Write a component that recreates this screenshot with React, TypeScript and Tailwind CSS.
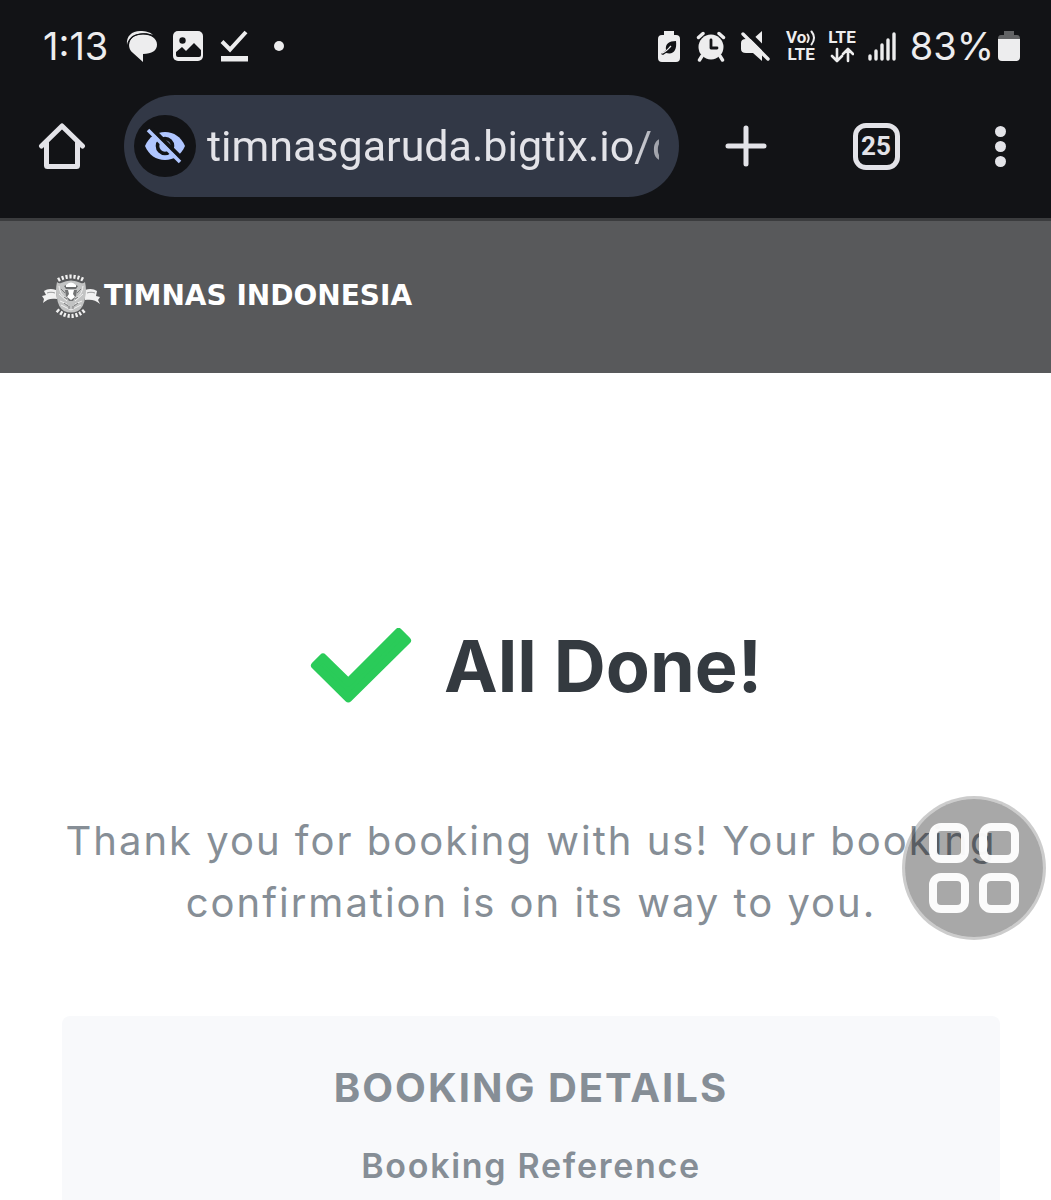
import { useState } from "react";

function StatusBar() {
  return (
    <div className="flex h-[92px] items-center justify-between pl-[43px] pr-[31px] text-[38px] text-[#ededee]">
      <div className="flex items-center">
        <span className="leading-none">1:13</span>
        {/* messages */}
        <svg className="ml-[18px] h-8 w-8" viewBox="0 0 32 32" fill="currentColor">
          <path d="M1 15C0 6 6 1 14 1c6 0 10 1 13 4C22 3 17 3 12 4 6 5 2 9 1 15Z" />
          <path d="M17 4.500c8 0 14 4 14 10s-5 9.500-14 9.500v8L7 23c-3-2-4-5-4-8.500C3 8.500 9 4.500 17 4.500Z" />
          <path
            d="M2.500 15C3 8.500 8 4 17 3.800c4 0 7 .7 10 2.200"
            fill="none"
            stroke="#121316"
            strokeWidth="1"
          />
        </svg>
        {/* gallery */}
        <svg className="ml-[14px] h-8 w-8" viewBox="0 0 32 32">
          <rect x="1" y="1" width="30" height="30" rx="5" fill="currentColor" />
          <circle cx="10.500" cy="10.500" r="3.200" fill="#121316" />
          <path
            d="M4 25v-3l6-5 4 4 8-8 7 7v5q0 2-2 2H6q-2 0-2-2Z"
            fill="#121316"
          />
        </svg>
        {/* task done */}
        <svg className="ml-4 h-8 w-[30px]" viewBox="0 0 30 32">
          <path
            d="M2 11.500l8 8L26 2"
            fill="none"
            stroke="currentColor"
            strokeWidth="4"
          />
          <path d="M1 26h27v5.500H1z" fill="currentColor" />
        </svg>
        <span className="ml-6 h-[10px] w-[10px] rounded-full bg-[#ededee]"></span>
      </div>

      <div className="flex items-center">
        {/* power saving */}
        <svg className="h-8 w-6" viewBox="0 0 24 32" fill="currentColor">
          <path d="M7 1h10v4h2q4 0 4 4v19q0 4-4 4H5q-4 0-4-4V9q0-4 4-4h2z" />
          <path
            d="M19 11c1 9-2 14-10 12l-3 2-2-1 5-4c-1-6 3-9 10-9Z"
            fill="#121316"
          />
          <path
            d="M5 23c4-1 6-4 9-7"
            fill="none"
            stroke="currentColor"
            strokeWidth="1.300"
          />
        </svg>
        {/* alarm */}
        <svg
          className="ml-[15px] h-8 w-[30px]"
          viewBox="0 0 30 32"
          stroke="currentColor"
          strokeLinecap="round"
          strokeLinejoin="round"
        >
          <path
            d="M2.500 7.500l4.500-4M27.500 7.500l-4.500-4M6 26l-2.500 4M24 26l2.500 4"
            fill="none"
            strokeWidth="3.400"
          />
          <circle cx="15" cy="17" r="12.500" fill="currentColor" stroke="none" />
          <path
            d="M15 10v8h6"
            fill="none"
            stroke="#121316"
            strokeWidth="2.800"
          />
        </svg>
        {/* muted */}
        <svg className="ml-[14px] h-8 w-[30px]" viewBox="0 0 30 32">
          <path
            d="M13 9l9-8v30l-9-8H6q-5 0-5-4v-6q0-4 5-4z"
            fill="currentColor"
          />
          <path d="M5 0l27 27" stroke="#121316" strokeWidth="5" />
          <path
            d="M3 4l25 25"
            stroke="currentColor"
            strokeWidth="3.400"
            strokeLinecap="round"
          />
        </svg>
        <span className="ml-4 flex flex-col items-center font-[Roboto] text-[17px] font-bold leading-[17px]">
          <span className="flex items-center">
            Vo
            <svg
              className="h-[17px] w-[10px]"
              viewBox="0 0 10 17"
              fill="none"
              stroke="currentColor"
              strokeWidth="2"
              strokeLinecap="round"
            >
              <path d="M1.500 5.500q2.500 3.500 0 7.500M5.500 2.500q5 6 0 13" />
            </svg>
          </span>
          <span>LTE</span>
        </span>
        <span className="ml-3 flex flex-col items-center font-[Roboto] text-[17px] font-bold leading-[17px]">
          <span>LTE</span>
          <svg
            className="h-[17px] w-6"
            viewBox="0 0 24 17"
            fill="none"
            stroke="currentColor"
            strokeWidth="2.600"
            strokeLinecap="round"
            strokeLinejoin="round"
          >
            <path d="M7 3v11M2 10l5 5 5-5M18 15V3M13 8l5-5 5 5" />
          </svg>
        </span>
        <svg
          className="ml-3 h-8 w-7"
          viewBox="0 0 28 32"
          fill="none"
          stroke="currentColor"
          strokeWidth="3.400"
          strokeLinecap="round"
        >
          <path d="M2 26v3M8 21v8M14 15v14M20 10v19M26 4v25" />
        </svg>
        <span className="ml-[14px] leading-none">83%</span>
        <svg className="ml-1 h-8 w-[22px]" viewBox="0 0 22 32">
          <path d="M6 1h10v4h3q3 0 3 4H0q0-4 3-4h3z" fill="#626365" />
          <path d="M0 9h22v18q0 4-4 4H4q-4 0-4-4z" fill="currentColor" />
        </svg>
      </div>
    </div>
  );
}

function BrowserBar() {
  const [url, setUrl] = useState("timnasgaruda.bigtix.io/c");

  return (
    <div className="flex items-center pb-[21px] pt-[3px] text-[#e3e3e8]">
      <button className="flex w-[124px] justify-center" aria-label="Home">
        <svg
          className="h-12 w-12"
          viewBox="0 0 48 48"
          fill="none"
          stroke="currentColor"
          strokeWidth="5"
          strokeLinecap="round"
          strokeLinejoin="round"
        >
          <path d="M3.500 24L24 4l20.500 20" />
          <path d="M8.500 21v22.500q0 1 1 1h29q1 0 1-1V21" />
        </svg>
      </button>
      <div className="flex h-[102px] min-w-0 flex-1 items-center rounded-full bg-[#323846] pl-[10px] pr-5">
        <button
          className="flex h-[62px] w-[62px] shrink-0 items-center justify-center rounded-full bg-[#121316] text-[#b0c6ff]"
          aria-label="Tracking protection"
        >
          <svg className="h-10 w-10" viewBox="0 0 40 40">
            <path
              d="M0 20C4 11 11 6 20 6s16 5 20 14c-4 9-11 14-20 14S4 29 0 20Z"
              fill="currentColor"
            />
            <circle
              cx="20"
              cy="20"
              r="7.500"
              fill="currentColor"
              stroke="#121316"
              strokeWidth="3.600"
            />
            <path d="M5 1l33 33" stroke="#121316" strokeWidth="4.500" />
            <path d="M3 4l32 32" stroke="currentColor" strokeWidth="3.600" />
          </svg>
        </button>
        <input
          className="ml-[11px] min-w-0 flex-1 bg-transparent font-[Roboto] text-[43px] leading-[60px] outline-none [mask-image:linear-gradient(to_right,black_94%,rgb(0_0_0/0.6))]"
          aria-label="Address"
          value={url}
          onChange={(e) => setUrl(e.target.value)}
        />
      </div>
      <button className="flex w-[134px] justify-center" aria-label="New tab">
        <svg
          className="h-11 w-11"
          viewBox="0 0 44 44"
          stroke="currentColor"
          strokeWidth="5"
          strokeLinecap="round"
        >
          <path d="M22 4v36M4 22h36" />
        </svg>
      </button>
      <button className="flex w-[126px] justify-center">
        <span className="flex h-[47px] w-[47px] items-center justify-center rounded-[13px] border-[5px] border-[#e3e3e8] font-[Roboto] text-[26px] font-bold leading-none">
          25
        </span>
      </button>
      <button
        className="flex w-[112px] flex-col items-center gap-1 pl-[10px]"
        aria-label="Menu"
      >
        <span className="h-[11px] w-[11px] rounded-full bg-[#e3e3e8]"></span>
        <span className="h-[11px] w-[11px] rounded-full bg-[#e3e3e8]"></span>
        <span className="h-[11px] w-[11px] rounded-full bg-[#e3e3e8]"></span>
      </button>
    </div>
  );
}

function Emblem() {
  return (
    <svg className="h-11 w-[58px]" viewBox="0 0 58 44" fill="none">
      {/* ribbons */}
      <path
        d="M14 16C9 14 5 15 2 17l2 4-4 1 2 3-1 4c4-4 8-5 14-4zM43 16c5-2 9-1 12 1l-1 5 4 1-2 3 2 4c-4-4-9-5-15-4z"
        fill="#f1f1f1"
      />
      <path d="M5 19c3-1 5-1 8 0M53 19c-3-1-5-1-8 0" stroke="#9a9b9c" />
      {/* wings and body */}
      <path
        d="M15 8q2 2 4 1 10-5 20 0 2 1 4-1 2 9 0 16-1 9-7 13-7 3-14 0-6-4-7-13-2-7 0-16Z"
        fill="#c2c3c3"
      />
      {/* lettering ring above and below the shield */}
      <path
        d="M16 6Q29-1 42 6M15 36q14 12 28 0"
        stroke="#f1f1f1"
        strokeWidth="4"
        strokeDasharray="2.200 1.800"
      />
      <path
        d="M17 12c1 7 3 10 8 12M41 12c-1 7-3 10-8 12M17 20l8 7M41 20l-8 7M19 31l10 5 10-5M18 27l7 3M40 27l-7 3"
        stroke="#f1f1f1"
      />
      <path
        d="M19 15l4 4M39 15l-4 4M22 23l3 2M36 23l-3 2M22 29l4 3M36 29l-4 3M27 32v3M31 32v3"
        stroke="#7a7b7c"
      />
      <path d="M22 12q7-4 14 0l-2 3H24z" fill="#6b6c6d" />
      <path d="M24 11q5-5 10 0v2H24z" fill="#ffffff" />
      <path d="M23 16h12l-1 6-3 5h-4l-3-5z" fill="#737475" />
      <path d="M26 16h6l-1 4 2 3-4 3-4-3 2-3z" fill="#ffffff" />
    </svg>
  );
}

function AssistButton() {
  return (
    <button
      className="fixed right-[5px] top-[796px] flex h-36 w-36 items-center justify-center rounded-full border-[3px] border-black/20 bg-black/34 bg-clip-padding"
      aria-label="Assistant menu"
    >
      <span className="grid grid-cols-2 gap-[10px] opacity-95">
        <span className="h-10 w-10 rounded-xl border-8 border-white"></span>
        <span className="h-10 w-10 rounded-xl border-8 border-white"></span>
        <span className="h-10 w-10 rounded-xl border-8 border-white"></span>
        <span className="h-10 w-10 rounded-xl border-8 border-white"></span>
      </span>
    </button>
  );
}

function App() {
  return (
    <div className="flex min-h-screen flex-col bg-white font-[Inter,sans-serif]">
      <div className="bg-[#121316]">
        <StatusBar />
        <BrowserBar />
      </div>

      <header className="flex h-[155px] items-center border-t-[3px] border-[#3b3c3e] bg-[#58595b] px-[42px] pb-[2px]">
        <a href="#" className="flex items-center gap-1 text-white">
          <Emblem />
          <span className="font-[DejaVu_Sans] text-[28px] font-bold leading-none">
            TIMNAS INDONESIA
          </span>
        </a>
      </header>

      <main className="flex flex-1 flex-col pl-[62px] pr-[51px] pt-[247px] text-center text-[#868e96]">
        <h1 className="flex items-center justify-center gap-8 pl-[10px] text-[72px] font-bold leading-[92px] text-[#343a40]">
          <svg className="h-[76px] w-[102px]" viewBox="0 0 102 76">
            <path
              d="M13 29.500L5 37.500 38.300 70.300 97 12.500 88.500 4 38.300 54.400Z"
              fill="#2acb59"
              stroke="#2acb59"
              strokeWidth="8"
              strokeLinejoin="round"
            />
          </svg>
          All Done!
        </h1>
        <p className="mt-[98px] text-[40px] leading-[62px] tracking-wider">
          Thank you for booking with us! Your booking confirmation is on its way
          to you.
        </p>
        <section className="mt-[82px] flex-1 rounded-t-lg bg-[#f8f9fb] pt-[41px]">
          <h2 className="text-[40px] font-bold leading-[62px] tracking-wider">
            BOOKING DETAILS
          </h2>
          <h3 className="mt-4 text-[34px] font-semibold leading-[62px] tracking-wider">
            Booking Reference
          </h3>
        </section>
      </main>
      <AssistButton />
    </div>
  );
}

export default App;
